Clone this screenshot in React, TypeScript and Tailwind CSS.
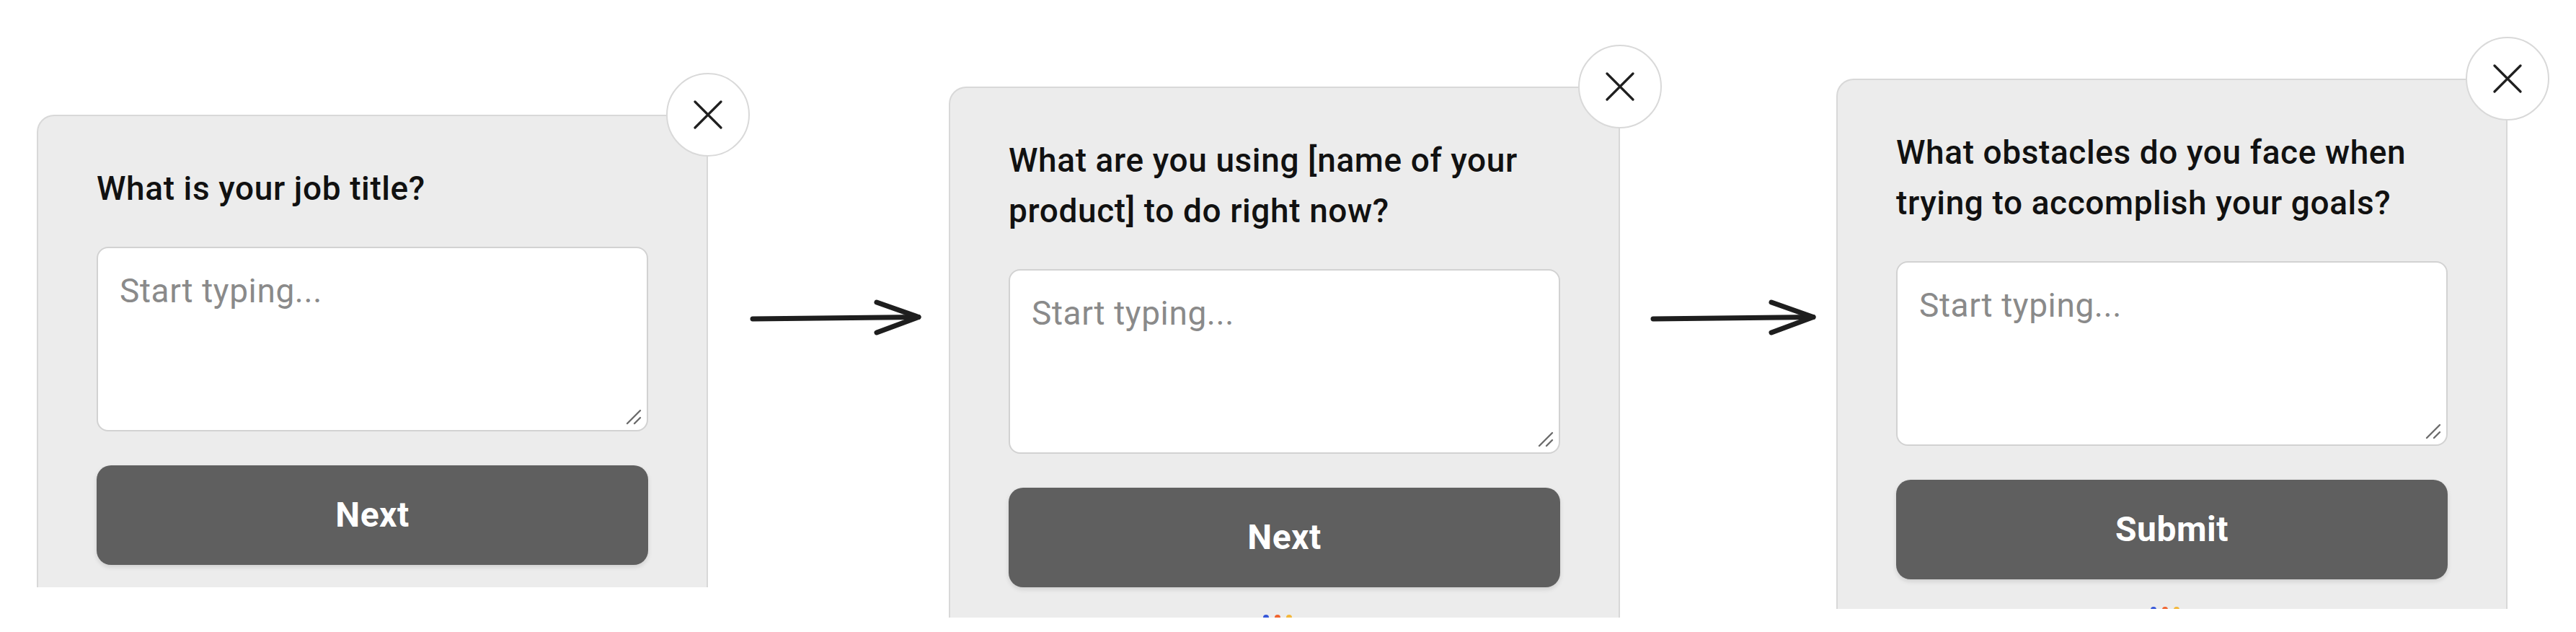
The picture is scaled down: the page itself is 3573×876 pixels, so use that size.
import React from 'react'

const steps = [
  { top: 'mt-[159px]', height: 'h-[655px]', lines: ['What is your job title?'], label: 'Next', dots: false },
  { top: 'mt-[120px]', height: 'h-[736px]', lines: ['What are you using [name of your', 'product] to do right now?'], label: 'Next', dots: true },
  { top: 'mt-[109px]', height: 'h-[735px]', lines: ['What obstacles do you face when', 'trying to accomplish your goals?'], label: 'Submit', dots: true },
]

function CloseIcon() {
  return (
    <svg width="40" height="40" viewBox="0 0 40 40" fill="none">
      <path d="M2 2 L38 38 M38 2 L2 38" stroke="#1f1f1f" strokeWidth="3.2" strokeLinecap="round" />
    </svg>
  )
}

function Grip() {
  return (
    <svg width="24" height="24" viewBox="0 0 24 24" fill="none">
      <path d="M3 21 L21 3 M13 21 L21 13" stroke="#6b6b6b" strokeWidth="2.4" strokeLinecap="round" />
    </svg>
  )
}

function Arrow({ width }: { width: number }) {
  return (
    <svg width={width} height="60" viewBox={`0 0 ${width} 60`} fill="none">
      <path d={`M4 32 L${width - 6} 29.5`} stroke="#1e1e1e" strokeWidth="7" strokeLinecap="round" />
      <path d={`M${width - 64} 9 L${width - 6} 29.5 L${width - 64} 51`} stroke="#1e1e1e" strokeWidth="7" strokeLinecap="round" strokeLinejoin="round" />
    </svg>
  )
}

function Card({ step }: { step: typeof steps[number] }) {
  return (
    <div className={`relative w-[931px] shrink-0 ${step.top}`}>
      <div className={`${step.height} overflow-hidden rounded-t-[24px] border-2 border-b-0 border-[#d8d8d8] bg-[#ececec] px-[81px] pt-[65px]`}>
        <div className="text-[46px] font-medium leading-[70px] tracking-[0.6px] text-[#111111]">
          {step.lines.map(l => (
            <div key={l} className="whitespace-nowrap">{l}</div>
          ))}
        </div>
        <div className="relative mt-[46px]">
          <textarea
            placeholder="Start typing..."
            className="block h-[256px] w-full resize-none rounded-[16px] border-2 border-[#d2d2d2] bg-white px-[30px] py-[29px] text-[46px] leading-[60px] tracking-[0.6px] text-[#222] outline-none placeholder:text-[#8a8a8a]"
          />
          <div className="absolute bottom-[8px] right-[8px]">
            <Grip />
          </div>
        </div>
        <button className="mt-[47px] flex h-[138px] w-full items-center justify-center rounded-[20px] bg-[#5f5f5f] text-[48px] font-bold tracking-[0.5px] text-white shadow-[0_3px_6px_rgba(0,0,0,0.12)]">
          {step.label}
        </button>
        {step.dots && (
          <div className="mt-[38px] flex justify-center gap-[8px] pr-[20px]">
            <span className="h-[8px] w-[8px] rounded-full bg-[#3657d8]" />
            <span className="h-[8px] w-[8px] rounded-full bg-[#f0642f]" />
            <span className="h-[8px] w-[8px] rounded-full bg-[#f3b73a]" />
          </div>
        )}
      </div>
      <div className="absolute -right-[58px] -top-[58px] flex h-[116px] w-[116px] items-center justify-center rounded-full border-2 border-[#d9d9d9] bg-white">
        <CloseIcon />
      </div>
    </div>
  )
}

export default function App() {
  return (
    <div className="h-[876px] w-[3573px] overflow-hidden bg-white font-['Roboto',_'Liberation_Sans',_sans-serif]">
      <div className="flex items-start pl-[51px]">
        <Card step={steps[0]} />
        <div className="w-[334px] shrink-0 pl-[58px] pt-[410px]">
          <Arrow width={240} />
        </div>
        <Card step={steps[1]} />
        <div className="w-[300px] shrink-0 pl-[42px] pt-[410px]">
          <Arrow width={232} />
        </div>
        <Card step={steps[2]} />
      </div>
    </div>
  )
}
